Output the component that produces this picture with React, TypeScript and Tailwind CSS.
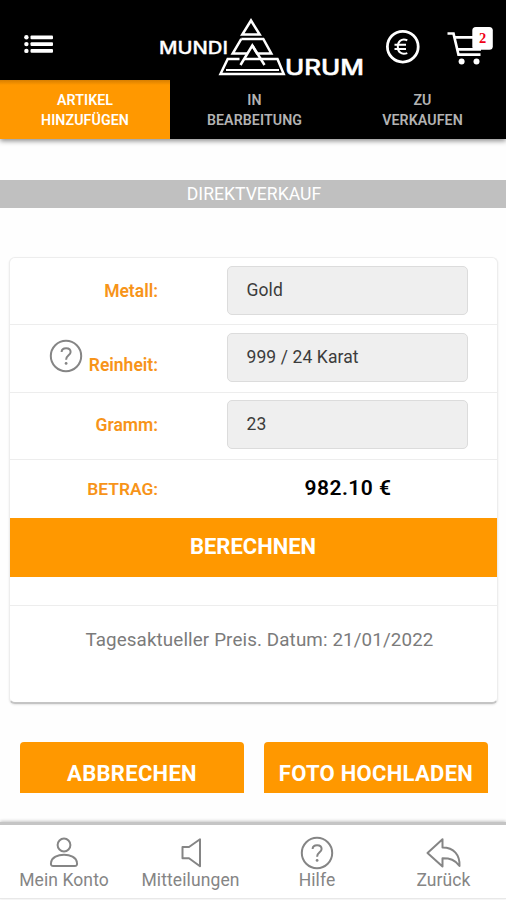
import type { ReactNode } from "react";

function Logo() {
  return (
    <svg width="206" height="64" viewBox="158 15 206 64" className="block" fill="none" stroke="#fff">
      <g strokeWidth="2.5">
        <path d="M251 20.5 L259.7 34.6 H242.3 Z" />
        <path d="M241.3 38.9 H263.3 L271.3 53.5 H257 L252.3 45.5 L240.5 65" />
        <path d="M241.3 38.9 L232.7 53.5 H247" />
        <path d="M252.3 45.5 L264.5 65" />
        <path d="M239.5 59 H227.7 L220.5 74 H283.7 L277.5 59 H244.5" />
        <path d="M226 70 H279" strokeWidth="1.8" />
      </g>
      <g fill="#fff" fontFamily="Inter, sans-serif">
        <text x="159" y="54" fontSize="16.8" fontWeight="500" strokeWidth="0.3" textLength="69" lengthAdjust="spacingAndGlyphs">MUNDI</text>
        <text x="285" y="74.6" fontSize="21" fontWeight="500" strokeWidth="0.5" textLength="79" lengthAdjust="spacingAndGlyphs">URUM</text>
      </g>
    </svg>
  );
}

function Header() {
  return (
    <header className="flex h-20 bg-black">
      <div className="w-[158px] pt-[34px] pl-6">
        <svg width="30" height="21" viewBox="0 0 30 21" fill="#fff">
          <circle cx="2.4" cy="3.3" r="2.2" />
          <circle cx="2.4" cy="10.1" r="2.2" />
          <circle cx="2.4" cy="16.9" r="2.2" />
          <rect x="6.5" y="1.5" width="22.5" height="3.7" rx="1" />
          <rect x="6.5" y="8.3" width="22.5" height="3.7" rx="1" />
          <rect x="6.5" y="15.1" width="22.5" height="3.7" rx="1" />
        </svg>
      </div>
      <div className="pt-[15px]"><Logo /></div>
      <div className="flex gap-6 pt-6 pl-[21px]">
        <svg width="36" height="46" viewBox="385 24 36 46" fill="none" stroke="#fff">
          <circle cx="402.8" cy="46.7" r="15.4" strokeWidth="2.8" />
          <path d="M407.3 40.3 C401 37.9 397.8 42 397.8 46.7 C397.8 51.5 401 55.5 407.3 53.1 M394.5 44.7 H406 M394.5 48.9 H406" strokeWidth="2" />
        </svg>
        <svg width="52" height="46" viewBox="445 24 52 46" fill="none" stroke="#fff">
          <path d="M447.5 33.5 H453.5 L458.5 54.7 H480.5 M455 37.3 H483 M456.5 49.4 H481" strokeWidth="2.7" />
          <circle cx="461.6" cy="61.4" r="3" fill="#fff" stroke="none" />
          <circle cx="476.5" cy="61.4" r="3" fill="#fff" stroke="none" />
          <rect x="472.3" y="27" width="20.5" height="22.7" rx="3.5" fill="#fff" stroke="none" />
          <text x="482.6" y="42.7" textAnchor="middle" fontFamily="Liberation Serif, serif" fontSize="14.5" fontWeight="700" fill="#f00015" stroke="none">2</text>
        </svg>
      </div>
    </header>
  );
}

function Tab({ top, bottom, active = false }: { top: string; bottom: string; active?: boolean }) {
  return (
    <div className={active
      ? "w-[170px] bg-[#ff9800] bg-linear-to-b from-[#d87f00] to-[#ff9800] to-[5px] pt-[10px] text-center text-white"
      : "w-[168px] pt-[10px] pl-px text-center text-[#b3b3b3]"}>
      <div>{top}</div>
      <div>{bottom}</div>
    </div>
  );
}

function Field({ label, value, help = false }: { label: string; value: string; help?: boolean }) {
  return (
    <div className="flex h-[67.3px] border-b border-[#ededed]">
      <div className="flex w-[148.5px] justify-end text-[17.5px] leading-5 font-semibold text-[#f79419]">
        {help && <HelpIcon className="mt-[14px] mr-[6px] block" />}
        <span className={help ? "mt-[29.5px]" : "mt-[22.5px]"}>{label}</span>
      </div>
      <div className="mt-[7.7px] ml-[68.5px] h-[49px] w-[241px] rounded-[5px] border border-[#dcdcdc] bg-[#efefef] pl-[19px] text-[17.5px] leading-[47px] tracking-[0.1px] text-[#3c3c3c]">
        {value}
      </div>
    </div>
  );
}

function HelpIcon({ className = "" }: { className?: string }) {
  return (
    <svg className={className} width="34" height="34" viewBox="0 0 34 34" fill="none" stroke="#858585">
      <circle cx="17" cy="17" r="15.2" strokeWidth="2" />
      <path d="M12.6 13 C12.8 8 21.6 8.2 21.6 13 C21.6 16.4 17.1 16.4 17.1 20.7" strokeWidth="2" />
      <circle cx="17.1" cy="24.4" r="1.4" fill="#858585" stroke="none" />
    </svg>
  );
}

function NavItem({ label, children }: { label: string; children: ReactNode }) {
  return (
    <div className="flex flex-1 flex-col items-center pt-[11px] pl-[1.5px] text-[17.5px] leading-5 tracking-[0.1px] whitespace-nowrap text-[#858585]">
      {children}
      <span className="mt-[0.5px]">{label}</span>
    </div>
  );
}

export default function App() {
  return (
    <div className="flex h-[900px] w-[506px] flex-col overflow-hidden bg-[#fefefe] font-[Roboto,sans-serif]">
      <Header />
      <nav className="flex h-[59px] shrink-0 bg-black text-[14.2px] leading-5 font-semibold tracking-[0.1px] shadow-[0_2px_5px_rgba(0,0,0,0.45)]">
        <Tab top="ARTIKEL" bottom="HINZUFÜGEN" active />
        <Tab top="IN" bottom="BEARBEITUNG" />
        <Tab top="ZU" bottom="VERKAUFEN" />
      </nav>
      <h1 className="mt-[40.5px] h-[28.5px] shrink-0 bg-[#c0c0c0] pl-[2px] text-center text-[17.6px] leading-[28px] text-white">DIREKTVERKAUF</h1>

      <main className="mx-[8.5px] mt-[49px] h-[447px] shrink-0 rounded-md border border-[#ededed] border-b-2 border-b-[#c4c4c4] bg-white shadow-[0_1px_2px_rgba(0,0,0,0.10)]">
        <Field label="Metall:" value="Gold" />
        <Field label="Reinheit:" value="999 / 24 Karat" help />
        <Field label="Gramm:" value="23" />
        <div className="flex h-[58px] items-center">
          <div className="w-[148.5px] text-right text-[17.4px] font-semibold text-[#f79419]">BETRAG:</div>
          <div className="-mt-px ml-[67.5px] w-[245px] text-center text-[21px] font-semibold tracking-[0.45px] text-black">982.10 €</div>
        </div>
        <button className="block h-[59px] w-full bg-[#ff9800] text-[22px] leading-[58px] font-bold text-white">BERECHNEN</button>
        <div className="h-[29px] border-b border-[#ededed]" />
        <p className="pt-[22px] pl-[13px] text-center text-[18.8px] leading-6 tracking-[0.12px] text-[#7b7b7b]">Tagesaktueller Preis. Datum: 21/01/2022</p>
      </main>

      <div className="mt-[37.5px] flex shrink-0 gap-5 pl-5 text-[22px] leading-[63px] font-bold tracking-[0.3px] text-white">
        <button className="h-[51px] w-[224px] overflow-hidden rounded-t-[4px] bg-[#ff9800] leading-[63px]">ABBRECHEN</button>
        <button className="h-[51px] w-[224px] overflow-hidden rounded-t-[4px] bg-[#ff9800] leading-[63px]">FOTO HOCHLADEN</button>
      </div>

      <footer className="mt-[29px] flex h-[77px] shrink-0 border-t-[3px] border-b border-t-[#c5c5c5] border-b-[#e8e8e8] bg-white shadow-[0_-1px_3px_rgba(0,0,0,0.22)]">
        <NavItem label="Mein Konto">
          <svg width="34" height="34" viewBox="0 0 34 34" fill="none" stroke="#858585" strokeWidth="2">
            <circle cx="17" cy="9" r="6.4" />
            <path d="M4 26.5 C5.5 16 28.5 16 30 26.5 Q30.6 30.1 27.5 30.1 H6.5 Q3.4 30.1 4 26.5 Z" />
          </svg>
        </NavItem>
        <NavItem label="Mitteilungen">
          <svg width="34" height="34" viewBox="0 0 34 34" fill="none" stroke="#858585" strokeWidth="2">
            <path d="M8.5 11 H15 L26 3.3 V30.2 L15 22.3 H8.5 Z" strokeLinejoin="round" />
          </svg>
        </NavItem>
        <NavItem label="Hilfe"><HelpIcon /></NavItem>
        <NavItem label="Zurück">
          <svg width="36" height="34" viewBox="0 0 36 34" fill="none" stroke="#858585" strokeWidth="2" strokeLinejoin="round">
            <path d="M1.5 17 L16.5 3.2 V11.5 C28 11.5 34 19 33.5 30 C29 23.5 24 22.3 16.5 22.3 V30.5 Z" />
          </svg>
        </NavItem>
      </footer>
    </div>
  );
}
